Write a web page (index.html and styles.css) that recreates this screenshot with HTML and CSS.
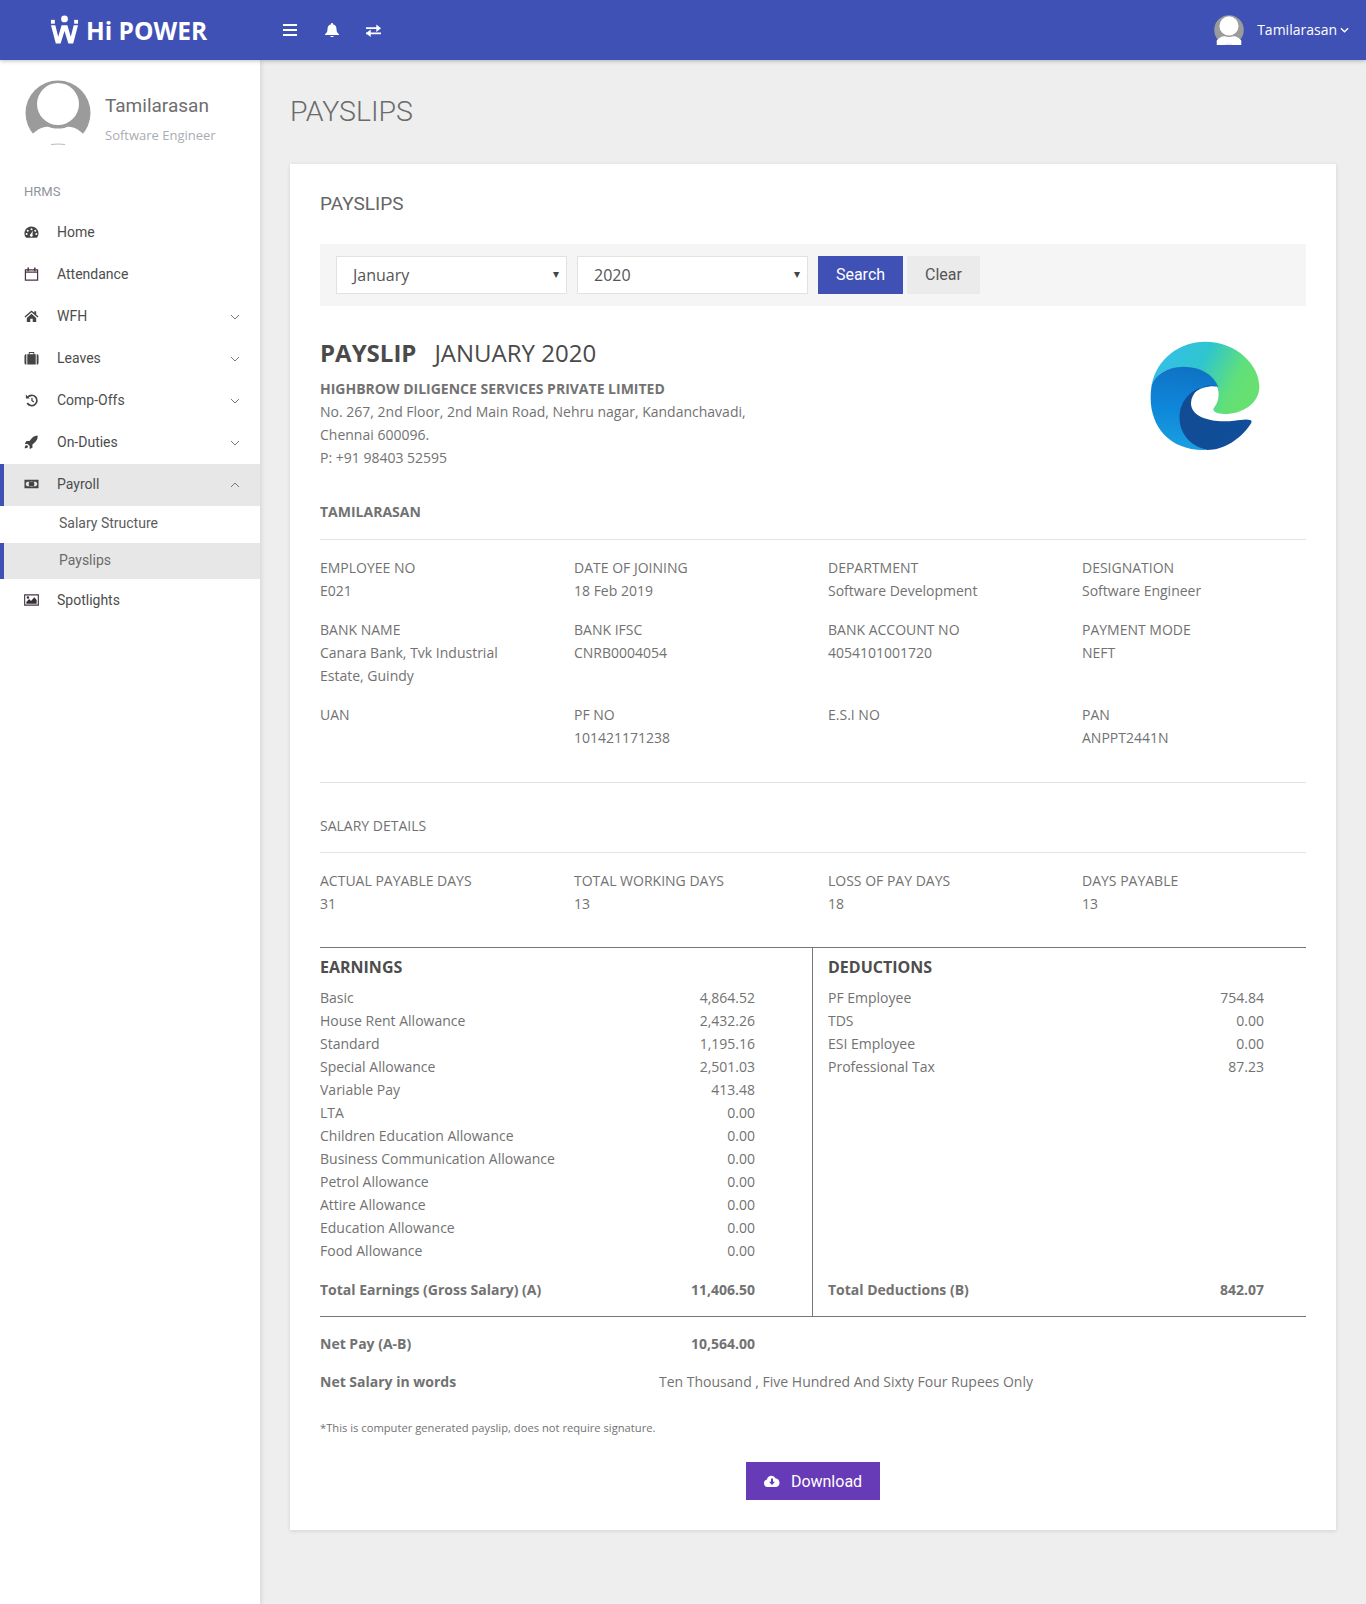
FILE: index.html
```html
<!DOCTYPE html>
<html lang="en">
<head>
    <meta charset="UTF-8">
    <title>Payslips</title>
    <link rel="stylesheet" href="styles.css">
</head>
<body>
    <svg class="icon-defs" width="0" height="0" aria-hidden="true">
        <symbol id="avatar" viewBox="0 0 66 66">
            <circle cx="33" cy="33" r="32.5" fill="#9b9b9b"/>
            <circle cx="33" cy="24" r="21" fill="#fff"/>
            <path d="M6 56c5-6 12-10 18-9 5 2 13 2 18 0 6-1 13 3 18 9v10H6z" fill="#fff"/>
            <path d="M26 64.500q7-1 14 0" stroke="#bbb" stroke-width="1" fill="none"/>
        </symbol>
    </svg>

    <header class="topbar">
        <div class="brand">
            <svg class="brand-mark" viewBox="0 0 30 30" width="29" height="30">
                <circle cx="15" cy="3.500" r="3.500" fill="#fff"/>
                <rect x="1" y="4.500" width="4" height="4" fill="#fff"/>
                <rect x="25" y="4.500" width="4" height="4" fill="#fff"/>
                <path d="M1 10h4.500l3 12L12 10h6l3.500 12 3-12H29l-5 19h-5l-4-13-4 13H6z" fill="#fff"/>
            </svg>
            <span class="brand-name">Hi POWER</span>
        </div>
        <div class="top-icons">
            <svg viewBox="0 0 14 12" width="14" height="12"><path d="M0 1h14M0 6h14M0 11h14" stroke="#fff" stroke-width="2"/></svg>
            <svg viewBox="0 0 14 14" width="14" height="14"><path d="M7 0a1 1 0 0 1 1 1.200c2.500.5 3.500 2.500 3.500 5 0 2.500 1 3.500 2.500 5v.8H0v-.8c1.500-1.500 2.500-2.500 2.500-5 0-2.500 1-4.500 3.500-5A1 1 0 0 1 7 0zM5.200 13h3.600a1.900 1.900 0 0 1-3.600 0z" fill="#fff"/></svg>
            <svg viewBox="0 0 16 13" width="15" height="13"><path d="M0 4h12M0 9.500h4M4 9.500h12" stroke="#fff" stroke-width="2"/><path d="M11 0l5 4-5 4zM5 5.500l-5 4 5 4z" fill="#fff"/></svg>
        </div>
        <div class="top-user">
            <svg class="top-avatar" width="30" height="30"><use href="#avatar"/></svg>
            <span>Tamilarasan</span>
            <svg viewBox="0 0 10 6" width="9" height="6"><path d="M1 1l4 4 4-4" stroke="#fff" stroke-width="1.500" fill="none"/></svg>
        </div>
    </header>

    <div class="layout">
        <aside class="sidebar">
            <div class="profile">
                <svg class="profile-pic" width="66" height="66"><use href="#avatar"/></svg>
                <div class="profile-text">
                    <div class="profile-name">Tamilarasan</div>
                    <div class="profile-role">Software Engineer</div>
                </div>
            </div>
            <div class="nav-title">HRMS</div>
            <nav>
                <a class="nav-item">
                    <svg class="nav-icon" viewBox="0 0 16 14"><path fill-rule="evenodd" d="M8 1a7.500 7.500 0 0 1 7.500 7.500c0 1.600-.5 3-1.300 4.200-.2.200-.4.300-.7.300H2.500c-.3 0-.5-.1-.7-.3A7.500 7.500 0 0 1 8 1zM8 3a1.100 1.100 0 1 0 0 2.200A1.100 1.100 0 0 0 8 3zM4 4.500a1.100 1.100 0 1 0 0 2.200 1.100 1.100 0 0 0 0-2.200zM12 4.500a1.100 1.100 0 1 0 0 2.200 1.100 1.100 0 0 0 0-2.200zM2.800 8a1.100 1.100 0 1 0 0 2.200 1.100 1.100 0 0 0 0-2.200zM13.200 8a1.100 1.100 0 1 0 0 2.200 1.100 1.100 0 0 0 0-2.200zM9.500 5.500L7 9.300a1.500 1.500 0 1 0 2 .4z" fill="#444"/></svg>
                    <span>Home</span>
                </a>
                <a class="nav-item">
                    <svg class="nav-icon" viewBox="0 0 16 14"><path d="M1.500 2.500h13v11h-13zM1.500 5h13" stroke="#4a3346" stroke-width="1.300" fill="none"/><path d="M4.500 0v4M11.500 0v4" stroke="#4a3346" stroke-width="1.600"/></svg>
                    <span>Attendance</span>
                </a>
                <a class="nav-item">
                    <svg class="nav-icon" viewBox="0 0 16 14"><path d="M8 1L.5 7.500l1 1L8 3l6.500 5.500 1-1L13 5.300V2h-2v1.600zM3 9v4.500h3.700V10h2.600v3.500H13V9L8 4.700z" fill="#444"/></svg>
                    <span>WFH</span>
                    <svg class="nav-caret" viewBox="0 0 10 6"><path d="M1 1l4 4 4-4" stroke="#777" stroke-width="1" fill="none"/></svg>
                </a>
                <a class="nav-item">
                    <svg class="nav-icon" viewBox="0 0 16 14"><path d="M5 3V1.500C5 1 5.400.5 6 .5h4c.6 0 1 .5 1 1V3h-1V1.700H6V3zM3.500 3h9v11h-9zM2.500 3v11C1.200 14 .5 13.300.5 12V5c0-1.300.7-2 2-2zM13.500 3c1.300 0 2 .7 2 2v7c0 1.300-.7 2-2 2z" fill="#444"/></svg>
                    <span>Leaves</span>
                    <svg class="nav-caret" viewBox="0 0 10 6"><path d="M1 1l4 4 4-4" stroke="#777" stroke-width="1" fill="none"/></svg>
                </a>
                <a class="nav-item">
                    <svg class="nav-icon" viewBox="0 0 16 14"><path d="M4 4a5.500 5.500 0 1 1-.5 6.200" stroke="#444" stroke-width="1.800" fill="none"/><path d="M2 1.200L6 5.500H2z" fill="#444"/><path d="M8.500 4.500v3.200l2 1.300" stroke="#444" stroke-width="1.300" fill="none"/></svg>
                    <span>Comp-Offs</span>
                    <svg class="nav-caret" viewBox="0 0 10 6"><path d="M1 1l4 4 4-4" stroke="#777" stroke-width="1" fill="none"/></svg>
                </a>
                <a class="nav-item">
                    <svg class="nav-icon" viewBox="0 0 16 14"><path d="M14.500 0c.4 3-.6 5.500-3 7.500L9 9.700V13l-3 1.500V11.200L3.800 9H.8L2.500 6h3.300l2.500-3C10 1 12 .2 14.500 0zM2.500 10.500c1.200 0 2 .9 1.500 2-.5.800-1.800 1-3.300 1.200.2-1.500.5-3.200 1.800-3.200z" fill="#444"/></svg>
                    <span>On-Duties</span>
                    <svg class="nav-caret" viewBox="0 0 10 6"><path d="M1 1l4 4 4-4" stroke="#777" stroke-width="1" fill="none"/></svg>
                </a>
                <a class="nav-item nav-active">
                    <svg class="nav-icon" viewBox="0 0 16 14"><path fill-rule="evenodd" d="M.5 2.500h15v9H.5zM3 4.500c0 .8-.6 1.200-1 1.200v2.600c.5 0 1 .5 1 1.200h10c0-.7.500-1.200 1-1.200V5.700c-.5 0-1-.4-1-1.200zM8 4a3 3 0 1 1 0 6 3 3 0 0 1 0-6z" fill="#444"/><path d="M7.300 5.800l1-.5V8.500" stroke="#444" stroke-width=".9" fill="none"/></svg>
                    <span>Payroll</span>
                    <svg class="nav-caret" viewBox="0 0 10 6"><path d="M1 5l4-4 4 4" stroke="#777" stroke-width="1" fill="none"/></svg>
                </a>
                <a class="nav-sub">Salary Structure</a>
                <a class="nav-sub nav-sub-active">Payslips</a>
                <a class="nav-item">
                    <svg class="nav-icon" viewBox="0 0 16 14"><path d="M.7 1.500h14.600v11H.7z" stroke="#4a3346" stroke-width="1.200" fill="none"/><path d="M2.500 11V9l3-3 2 2 3.500-4 2.500 3v4z" fill="#333"/><circle cx="4.200" cy="4.300" r="1.300" fill="#333"/></svg>
                    <span>Spotlights</span>
                </a>
            </nav>
        </aside>

        <main class="content">
            <h1 class="page-title">PAYSLIPS</h1>
            <section class="card">
                <h2 class="card-title">PAYSLIPS</h2>
                <div class="filter-bar">
                    <div class="fake-select"><span>January</span><i>▾</i></div>
                    <div class="fake-select"><span>2020</span><i>▾</i></div>
                    <button class="btn btn-search">Search</button>
                    <button class="btn btn-clear">Clear</button>
                </div>

                <div class="slip-head">
                    <div>
                        <div class="slip-title"><b>PAYSLIP</b><span>JANUARY 2020</span></div>
                        <div class="company">HIGHBROW DILIGENCE SERVICES PRIVATE LIMITED</div>
                        <div class="line">No. 267, 2nd Floor, 2nd Main Road, Nehru nagar, Kandanchavadi,</div>
                        <div class="line">Chennai 600096.</div>
                        <div class="line">P: +91 98403 52595</div>
                    </div>
                    <svg class="edge-logo" viewBox="90 33 330 330" width="110" height="110">
                        <defs>
                            <linearGradient id="edgeTop" x1="0" y1="0" x2="1" y2="0.35">
                                <stop offset="0" stop-color="#37bdf0"/>
                                <stop offset="0.5" stop-color="#2ec5cf"/>
                                <stop offset="0.85" stop-color="#5fdf7c"/>
                                <stop offset="1" stop-color="#66e070"/>
                            </linearGradient>
                            <linearGradient id="edgeMid" x1="0.5" y1="0" x2="0.4" y2="1">
                                <stop offset="0" stop-color="#0f72c4"/>
                                <stop offset="0.5" stop-color="#0e86da"/>
                                <stop offset="1" stop-color="#1aa0e0"/>
                            </linearGradient>
                            <linearGradient id="edgeDark" x1="0" y1="0" x2="1" y2="1">
                                <stop offset="0" stop-color="#134a90"/>
                                <stop offset="1" stop-color="#0f4f9c"/>
                            </linearGradient>
                        </defs>
                        <path d="M95 165C110 85 180 35 255 35c95 0 163 70 163 135 0 50-50 82-105 82-20 0-33-6-33-14 0-5 20-20 15-55-6-40-50-70-110-70-60 0-80 30-90 52z" fill="url(#edgeTop)"/>
                        <path d="M95 165c10-30 45-55 95-55 55 0 90 25 105 60-45-8-95 20-110 70-12 50 15 100 75 120C150 365 90 290 92 200c0-12 1-24 3-35z" fill="url(#edgeMid)"/>
                        <path d="M295 170c-40-12-80 10-82 50 0 45 70 60 130 52 20-2 35-6 47-2 6 2 6 6 2 12-30 45-80 78-130 78-60-12-95-65-80-125 15-50 65-75 113-65z" fill="url(#edgeDark)"/>
                    </svg>
                </div>

                <div class="emp-name">TAMILARASAN</div>
                <hr class="rule">
                <div class="info-grid">
                    <div><label>EMPLOYEE NO</label><p>E021</p></div>
                    <div><label>DATE OF JOINING</label><p>18 Feb 2019</p></div>
                    <div><label>DEPARTMENT</label><p>Software Development</p></div>
                    <div><label>DESIGNATION</label><p>Software Engineer</p></div>
                    <div><label>BANK NAME</label><p>Canara Bank, Tvk Industrial Estate, Guindy</p></div>
                    <div><label>BANK IFSC</label><p>CNRB0004054</p></div>
                    <div><label>BANK ACCOUNT NO</label><p>4054101001720</p></div>
                    <div><label>PAYMENT MODE</label><p>NEFT</p></div>
                    <div><label>UAN</label><p></p></div>
                    <div><label>PF NO</label><p>101421171238</p></div>
                    <div><label>E.S.I NO</label><p></p></div>
                    <div><label>PAN</label><p>ANPPT2441N</p></div>
                </div>
                <hr class="rule rule-after-info">
                <div class="section-label">SALARY DETAILS</div>
                <hr class="rule rule-salary">
                <div class="info-grid">
                    <div><label>ACTUAL PAYABLE DAYS</label><p>31</p></div>
                    <div><label>TOTAL WORKING DAYS</label><p>13</p></div>
                    <div><label>LOSS OF PAY DAYS</label><p>18</p></div>
                    <div><label>DAYS PAYABLE</label><p>13</p></div>
                </div>

                <div class="pay-table">
                    <div class="pay-col pay-earn">
                        <h3>EARNINGS</h3>
                        <div class="pay-rows">
                            <div class="pay-row"><span>Basic</span><span>4,864.52</span></div>
                            <div class="pay-row"><span>House Rent Allowance</span><span>2,432.26</span></div>
                            <div class="pay-row"><span>Standard</span><span>1,195.16</span></div>
                            <div class="pay-row"><span>Special Allowance</span><span>2,501.03</span></div>
                            <div class="pay-row"><span>Variable Pay</span><span>413.48</span></div>
                            <div class="pay-row"><span>LTA</span><span>0.00</span></div>
                            <div class="pay-row"><span>Children Education Allowance</span><span>0.00</span></div>
                            <div class="pay-row"><span>Business Communication Allowance</span><span>0.00</span></div>
                            <div class="pay-row"><span>Petrol Allowance</span><span>0.00</span></div>
                            <div class="pay-row"><span>Attire Allowance</span><span>0.00</span></div>
                            <div class="pay-row"><span>Education Allowance</span><span>0.00</span></div>
                            <div class="pay-row"><span>Food Allowance</span><span>0.00</span></div>
                        </div>
                        <div class="pay-row pay-total"><span>Total Earnings (Gross Salary) (A)</span><span>11,406.50</span></div>
                    </div>
                    <div class="pay-col pay-deduct">
                        <h3>DEDUCTIONS</h3>
                        <div class="pay-rows">
                            <div class="pay-row"><span>PF Employee</span><span>754.84</span></div>
                            <div class="pay-row"><span>TDS</span><span>0.00</span></div>
                            <div class="pay-row"><span>ESI Employee</span><span>0.00</span></div>
                            <div class="pay-row"><span>Professional Tax</span><span>87.23</span></div>
                        </div>
                        <div class="pay-row pay-total"><span>Total Deductions (B)</span><span>842.07</span></div>
                    </div>
                </div>

                <div class="net-pay"><b>Net Pay (A-B)</b><b>10,564.00</b></div>
                <div class="net-words"><b>Net Salary in words</b><span>Ten Thousand , Five Hundred And Sixty Four Rupees Only</span></div>
                <p class="note">*This is computer generated payslip, does not require signature.</p>
                <div class="download-wrap">
                    <button class="btn btn-download">
                        <svg viewBox="0 0 16 12" width="16" height="12"><path fill-rule="evenodd" d="M4 12a3.800 3.800 0 0 1-1-7.500A4.500 4.500 0 0 1 11.500 3.300 4.500 4.500 0 0 1 12.500 12zM7 3.500v3.300H5L8 10l3-3.200H9V3.500z" fill="#fff"/></svg>
                        <span>Download</span>
                    </button>
                </div>
            </section>
        </main>
    </div>
</body>
</html>
```

FILE: styles.css
```css
* {
    box-sizing: border-box;
}
body {
    margin: 0;
    font-family: "Open Sans", sans-serif;
    font-size: 14px;
    color: #727272;
    background-color: #eeeeee;
}
.icon-defs {
    display: block;
    height: 0;
}
.topbar {
    position: relative;
    z-index: 2;
    display: flex;
    align-items: center;
    height: 60px;
    background-color: #3f51b5;
    box-shadow: 0 1px 4px rgba(0,0,0,0.25);
    color: #fff;
}
.brand {
    display: flex;
    align-items: center;
    width: 283px;
    padding-left: 50px;
}
.brand-name {
    margin-left: 7px;
    font-size: 24.500px;
    font-weight: 700;
}
.top-icons {
    display: flex;
    align-items: center;
    gap: 27.500px;
}
.top-user {
    display: flex;
    align-items: center;
    margin-left: auto;
    padding-right: 17px;
    font-size: 14px;
    padding-bottom: 1px;
}
.top-avatar {
    margin-right: 13px;
}
.top-user span {
    margin-right: 3px;
}
.layout {
    display: flex;
    min-height: 1544px;
}
.sidebar {
    flex: 0 0 260px;
    background-color: #fff;
    box-shadow: 1px 0 5px rgba(0,0,0,0.12);
    font-family: Roboto, sans-serif;
}
.profile {
    display: flex;
    align-items: center;
    padding: 20px 0 0 25px;
}
.profile-pic {
    margin-right: 14px;
}
.profile-text {
    margin-top: 11px;
}
.profile-name {
    font-family: Roboto, sans-serif;
    font-size: 19px;
    color: #6e6e6e;
    margin-bottom: 9px;
}
.profile-role {
    font-family: "Open Sans", sans-serif;
    font-size: 13px;
    color: #a9adb3;
}
.nav-title {
    margin-top: 38px;
    padding-left: 24px;
    font-size: 13px;
    color: #8f949b;
    margin-bottom: 13px;
}
.nav-item {
    display: flex;
    align-items: center;
    height: 42px;
    padding: 0 20px 2px 24px;
    color: #4d4d4d;
    font-size: 14px;
}
.nav-icon {
    width: 15px;
    height: 14px;
    margin-right: 18px;
}
.nav-caret {
    width: 10px;
    height: 6px;
    margin-left: auto;
    margin-top: 2px;
}
.nav-active {
    background-color: #e7e7e7;
    border-left: 4px solid #3f51b5;
    padding-left: 20px;
}
.nav-sub {
    display: flex;
    align-items: center;
    height: 37px;
    padding: 0 0 3px 59px;
    color: #5c5c5c;
    font-size: 14px;
}
.nav-sub-active {
    height: 36px;
    background-color: #e7e7e7;
    border-left: 4px solid #3f51b5;
    padding: 0 0 3px 55px;
    color: #6a6a6a;
}
.nav-sub-active + .nav-item {
    padding-bottom: 0;
}
.content {
    flex: 1;
    min-width: 0;
    padding: 0 30px;
    font-family: "Open Sans", sans-serif;
}
.page-title {
    margin: 34px 0 35px;
    font-family: Roboto, sans-serif;
    font-size: 28.500px;
    font-weight: 300;
    line-height: 35px;
    color: #6b6b6b;
}
.card {
    background-color: #fff;
    padding: 28px 30px 30px;
    box-shadow: 0 1px 4px rgba(0,0,0,0.12);
    height: 1366px;
}
.card-title {
    margin: 0 0 28px;
    font-family: Roboto, sans-serif;
    font-size: 19px;
    font-weight: 400;
    line-height: 24px;
    color: #666;
}
.filter-bar {
    display: flex;
    align-items: center;
    height: 62px;
    padding: 0 16px;
    background-color: #f5f5f5;
}
.fake-select {
    position: relative;
    display: flex;
    align-items: center;
    width: 231px;
    height: 38px;
    margin-right: 10px;
    padding-left: 16px;
    background-color: #fff;
    border: 1px solid #e2e2e2;
    font-size: 16px;
    color: #555;
}
.fake-select i {
    position: absolute;
    right: 7px;
    top: 8px;
    font-style: normal;
    font-size: 12px;
    color: #444;
}
.btn {
    height: 38px;
    border: none;
    font-family: Roboto, sans-serif;
    font-size: 16px;
}
.btn-search {
    width: 85px;
    padding-bottom: 3px;
    background-color: #3f51b5;
    color: #fff;
}
.btn-clear {
    width: 73px;
    margin-left: 4px;
    padding-bottom: 3px;
    background-color: #ebebeb;
    color: #555;
}
.slip-head {
    display: flex;
    justify-content: space-between;
    margin-top: 31px;
}
.edge-logo {
    margin: 4px 46px 0 0;
}
.slip-title {
    font-size: 24px;
    line-height: 32px;
    color: #4a4a4a;
    margin-bottom: 8px;
}
.slip-title span {
    margin-left: 18px;
}
.company {
    font-weight: 700;
    line-height: 23px;
}
.line {
    line-height: 23px;
}
.emp-name {
    margin-top: 31px;
    font-weight: 700;
    line-height: 23px;
}
.rule {
    margin: 16px 0 0;
    border: none;
    border-top: 1px solid #e2e2e2;
}
.info-grid {
    display: grid;
    grid-template-columns: 254px 254px 254px 1fr;
    row-gap: 16px;
    padding-top: 16px;
}
.info-grid label {
    display: block;
    line-height: 23px;
}
.info-grid p {
    margin: 0;
    line-height: 23px;
    min-height: 23px;
    max-width: 210px;
}
.rule-after-info {
    margin-top: 33px;
}
.section-label {
    margin-top: 31px;
    line-height: 23px;
}
.rule-salary {
    margin-top: 15px;
}
.pay-table {
    display: flex;
    margin-top: 32px;
    height: 370px;
    border-top: 1px solid #777;
    border-bottom: 1px solid #777;
}
.pay-col {
    display: flex;
    flex-direction: column;
}
.pay-earn {
    width: 493px;
    padding-right: 57px;
    border-right: 1px solid #777;
}
.pay-deduct {
    flex: 1;
    padding: 0 42px 0 15px;
}
.pay-col h3 {
    margin: 7px 0 7px;
    font-size: 16px;
    font-weight: 700;
    line-height: 24px;
    color: #4d4d4d;
}
.pay-rows {
    flex: 1;
}
.pay-row {
    display: flex;
    justify-content: space-between;
    line-height: 23px;
}
.pay-total {
    font-weight: 700;
    margin-bottom: 15px;
}
.net-pay {
    display: flex;
    justify-content: space-between;
    width: 435px;
    margin-top: 15px;
    line-height: 23px;
}
.net-words {
    display: flex;
    margin-top: 15px;
    line-height: 23px;
}
.net-words b {
    width: 339px;
}
.note {
    margin: 23px 0 0;
    font-size: 11.200px;
    line-height: 23px;
}
.download-wrap {
    display: flex;
    justify-content: center;
    margin-top: 23px;
}
.btn-download {
    display: flex;
    align-items: center;
    justify-content: center;
    gap: 11px;
    width: 134px;
    background-color: #673ab7;
    color: #fff;
}
```
